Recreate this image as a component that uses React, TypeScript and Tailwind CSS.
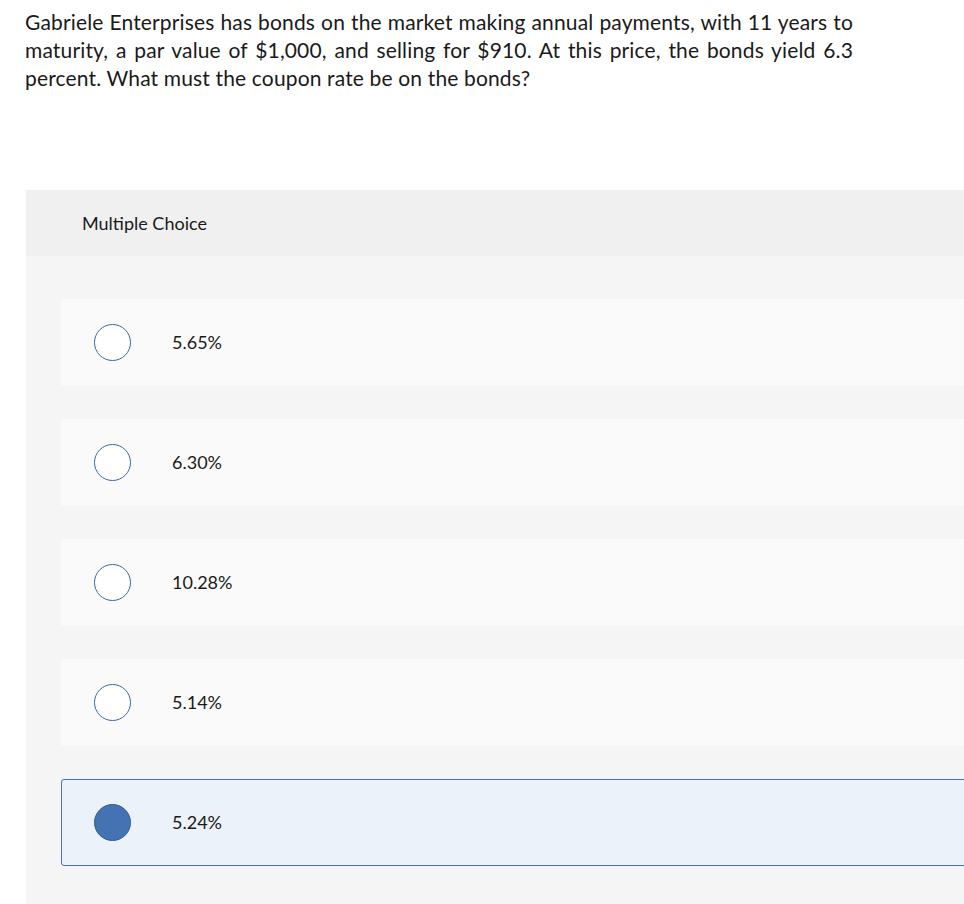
import React from "react";

const options = ["5.65%", "6.30%", "10.28%", "5.14%", "5.24%"];
const selected = 4;

export default function App() {
  return (
    <div className="min-h-[904px] w-[964px] overflow-hidden bg-white text-[#1a1a1a]" style={{ fontFamily: "Lato, 'Open Sans', sans-serif" }}>
      <p className="ml-[25px] mt-[8px] w-[828px] text-[21px] leading-[28px] tracking-[0.15px]">
        <span className="block text-justify [text-align-last:justify]">
          Gabriele Enterprises has bonds on the market making annual payments, with 11 years to
        </span>
        <span className="block text-justify [text-align-last:justify]">
          maturity, a par value of $1,000, and selling for $910. At this price, the bonds yield 6.3
        </span>
        <span className="block">percent. What must the coupon rate be on the bonds?</span>
      </p>
      <div className="ml-[26px] mt-[98px] w-[960px] rounded-tl-[3px] bg-[#f5f5f5]">
        <div className="flex h-[66px] items-center bg-[#f0f0f0] pl-[56px] text-[18px]">Multiple Choice</div>
        <div className="flex flex-col gap-[33px] pl-[35px] pt-[43px] pb-[40px]">
          {options.map((o, i) => {
            const sel = i === selected;
            return (
              <div
                key={o}
                className={
                  sel
                    ? "flex h-[87px] items-center rounded-[3px] border border-[#4472b0] bg-[#ecf2fa] pl-[32px]"
                    : "flex h-[87px] items-center rounded-[3px] bg-[#fafafa] pl-[33px]"
                }
              >
                <span
                  className={
                    sel
                      ? "h-[37px] w-[37px] shrink-0 rounded-full border border-[#2f5e9a] bg-[#4472b2]"
                      : "h-[37px] w-[37px] shrink-0 rounded-full border border-[#3d67a0] bg-white"
                  }
                />
                <span className="ml-[41px] text-[18px]">{o}</span>
              </div>
            );
          })}
        </div>
      </div>
    </div>
  );
}
